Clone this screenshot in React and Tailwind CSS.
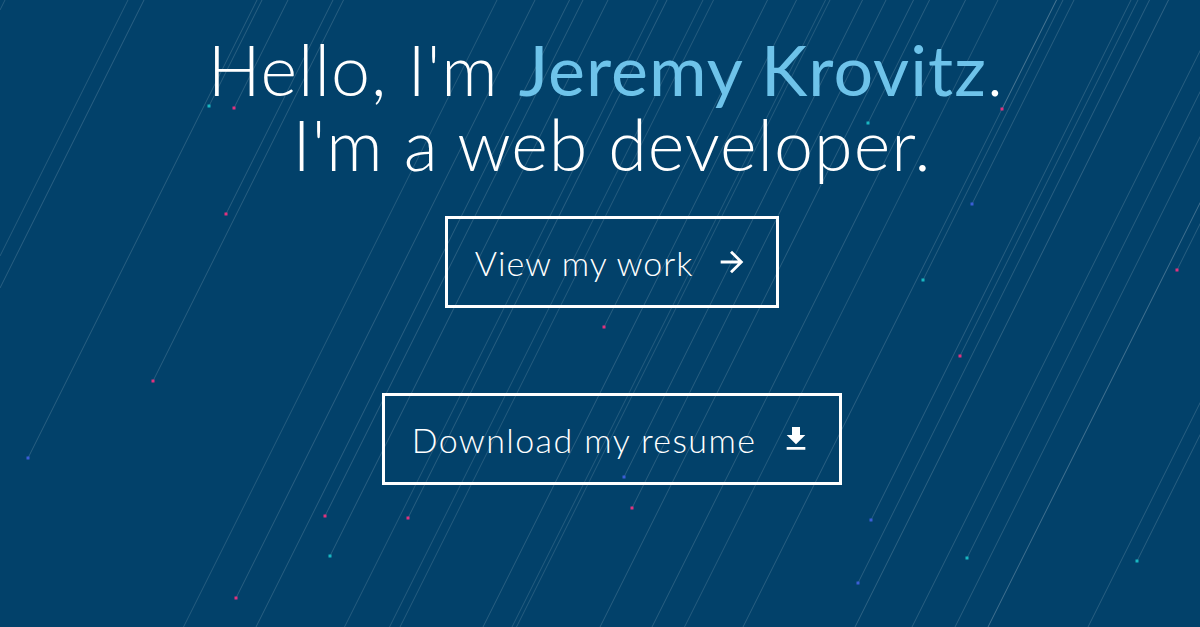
import { MdArrowForward, MdFileDownload } from "react-icons/md";

const PINK = "#e2327e";
const CYAN = "#19b7c2";
const BLUE = "#3b5ed6";

// meteor heads visible on screen: [x, y, color]
const heads = [
  [209, 106, CYAN],
  [234, 108, PINK],
  [226, 214, PINK],
  [1002, 109, PINK],
  [868, 123, CYAN],
  [972, 204, BLUE],
  [1177, 270, PINK],
  [923, 280, CYAN],
  [604, 327, PINK],
  [960, 356, PINK],
  [153, 381, PINK],
  [28, 458, BLUE],
  [624, 477, BLUE],
  [632, 508, PINK],
  [325, 516, PINK],
  [408, 518, PINK],
  [871, 520, BLUE],
  [330, 556, CYAN],
  [967, 558, CYAN],
  [1137, 561, CYAN],
  [858, 583, BLUE],
  [236, 598, PINK],
];

// trails whose heads sit below or left of the picture: [x, y, opacity]
const hidden = [
  [256, 627, 0.16],
  [400, 627, 0.14],
  [483, 627, 0.16],
  [512, 627, 0.14],
  [600, 627, 0.16],
  [652, 627, 0.16],
  [743, 627, 0.16],
  [855, 627, 0.18],
  [912, 627, 0.16],
  [955, 627, 0.16],
  [988, 627, 0.26],
  [1088, 627, 0.16],
  [0, 256, 0.14],
  [0, 288, 0.16],
  [0, 10, 0.14],
  [497, 0, 0.14],
  [658, 0, 0.14],
  [703, 0, 0.14],
  [830, 0, 0.14],
  [998, 0, 0.14],
];

function Meteors() {
  return (
    <svg className="absolute inset-0 h-full w-full" viewBox="0 0 1200 627" preserveAspectRatio="none">
      {hidden.map(([x, y, o], i) => {
        if (y === 0) {
          return (
            <line key={"t" + i} x1={x} y1={0} x2={x - 420} y2={840} stroke="white" strokeOpacity={o} strokeWidth="1" />
          );
        }
        return (
          <line key={"h" + i} x1={x} y1={y} x2={x + 420} y2={y - 840} stroke="white" strokeOpacity={o} strokeWidth="1" />
        );
      })}
      {heads.map(([x, y, c], i) => (
        <g key={i}>
          <line x1={x} y1={y} x2={x + 420} y2={y - 840} stroke="white" strokeOpacity="0.16" strokeWidth="1" />
          <rect x={x - 1.5} y={y - 1.5} width="3" height="3" fill={c} />
        </g>
      ))}
    </svg>
  );
}

export default function App() {
  return (
    <div
      className="relative h-[627px] w-full overflow-hidden bg-[#02416a] text-white"
      style={{ fontFamily: "Lato, 'Open Sans', sans-serif" }}
    >
      <Meteors />

      <div className="relative flex flex-col items-center pl-6 pt-[32px]">
        <h1 className="text-center text-[70px] font-light leading-[75px] tracking-[1px]">
          <span className="block pr-[12px]">
            Hello, I'm <span className="font-normal text-[#6ec3ea]">Jeremy Krovitz</span>.
          </span>
          <span className="block">I'm a web developer.</span>
        </h1>

        <a
          href="#work"
          className="mt-[34px] flex h-[92px] w-[334px] items-center justify-center gap-[22px] border-[3px] border-white text-[34px] font-light tracking-[1px]"
        >
          <span>View my work</span>
          <MdArrowForward className="h-[34px] w-[34px]" />
        </a>

        <a
          href="#resume"
          className="mt-[85px] flex h-[92px] w-[460px] items-center justify-center gap-[24px] border-[3px] border-white text-[34px] font-light tracking-[1.4px]"
        >
          <span>Download my resume</span>
          <MdFileDownload className="h-[32px] w-[32px]" />
        </a>
      </div>
    </div>
  );
}
